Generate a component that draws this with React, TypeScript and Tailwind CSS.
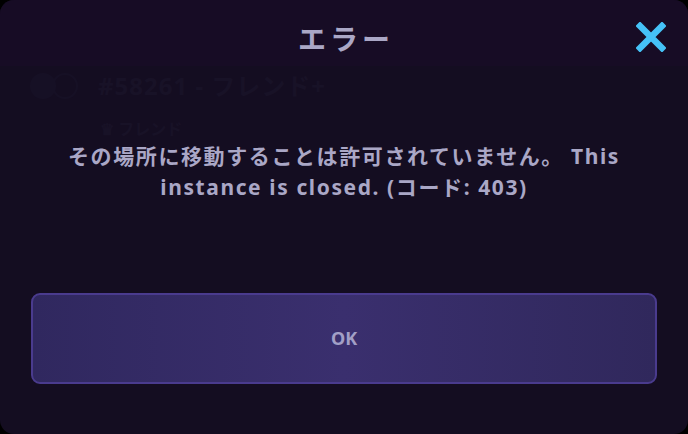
import React from "react";

export default function App() {
  return (
    <div className="w-[688px] h-[434px] bg-black" style={{ fontFamily: '"Noto Sans", "Noto Sans CJK JP", sans-serif' }}>
      <div className="relative w-full h-full rounded-[14px] overflow-hidden bg-[#140d21] flex flex-col">
        {/* faint ghost content behind overlay */}
        <div className="absolute left-[30px] top-[68px] flex items-center gap-[20px] opacity-[0.03] pointer-events-none">
          <div className="flex">
            <div className="w-[26px] h-[26px] rounded-full bg-[#5a6aa0]" />
            <div className="w-[26px] h-[26px] rounded-full border-2 border-[#5a6aa0] -ml-[4px]" />
          </div>
          <span className="text-[24px] font-bold text-[#9aa0d0] tracking-[1px]">#58261 - フレンド+</span>
        </div>
        <div className="absolute left-[100px] top-[117px] opacity-[0.03] pointer-events-none">
          <span className="text-[16px] font-bold text-[#9aa0d0]">♛ フレンド</span>
        </div>

        <div className="relative h-[66px] shrink-0 bg-[#170c25] flex items-center justify-center pt-[10px]">
          <span className="text-[28px] font-bold text-[#aaa7c6] tracking-[4px] pl-[4px]" style={{ fontFamily: '"Noto Sans CJK JP", sans-serif' }}>
            エラー
          </span>
          <button className="absolute right-[22px] top-[22px] w-[30px] h-[30px] flex items-center justify-center">
            <svg width="30" height="30" viewBox="0 0 30 30">
              <path d="M4 4 L26 26 M26 4 L4 26" stroke="#45c2f7" strokeWidth="6.5" strokeLinecap="square" fill="none" />
            </svg>
          </button>
        </div>

        <div className="relative flex-1 flex flex-col">
          <p className="mt-[75px] text-center text-[21px] leading-[31px] font-bold text-[#aaa7c6] tracking-[1.6px]">
            その場所に移動することは許可されていません。 This
            <br />
            instance is closed. (コード: 403)
          </p>
          <div className="flex-1" />
          <button className="mx-[31px] mb-[50px] h-[91px] rounded-[9px] border-2 border-[#4a3b8e] bg-gradient-to-r from-[#30285f] via-[#3a2f6e] to-[#30285c] flex items-center justify-center">
            <span className="text-[18px] font-bold text-[#a29fc6]">OK</span>
          </button>
        </div>
      </div>
    </div>
  );
}
